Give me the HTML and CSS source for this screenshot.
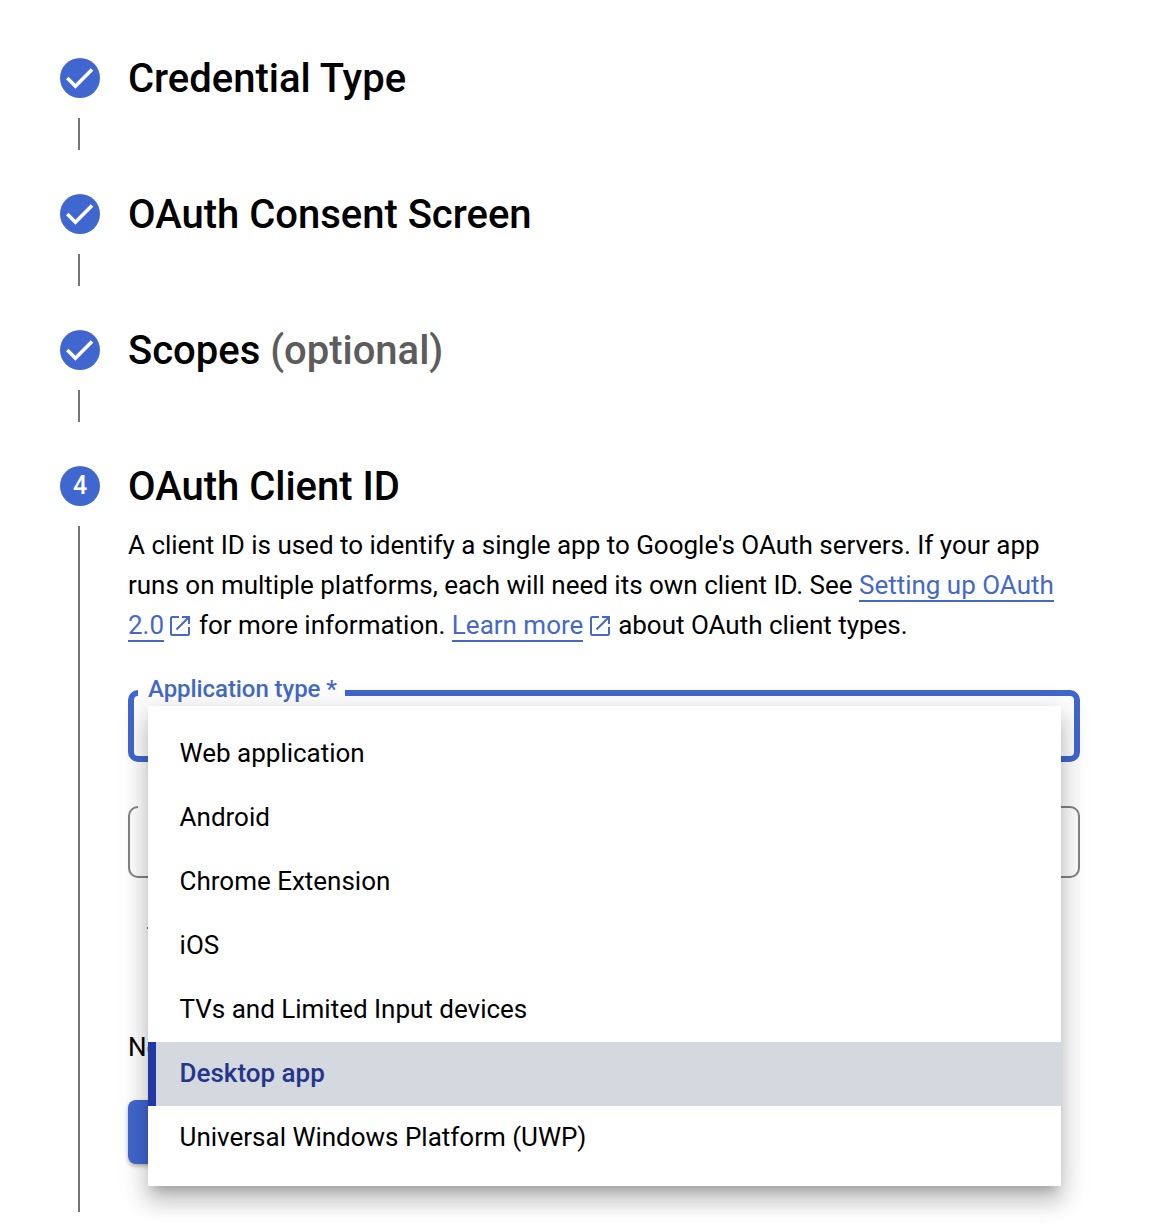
FILE: index.html
```html
<!DOCTYPE html>
<html lang="en">
<head>
<meta charset="utf-8">
<title>Create credentials</title>
<link rel="stylesheet" href="styles.css">
</head>
<body>
<svg class="defs" aria-hidden="true">
  <symbol id="check" viewBox="0 0 40 40"><path d="M7.300 20 L15.400 28.200 L32 11.400" fill="none" stroke="#fff" stroke-width="3.6"/></symbol>
  <symbol id="external" viewBox="0 0 20 20"><path d="M9 1H2.2Q1 1 1 2.200V17.800Q1 19 2.200 19H17.800Q19 19 19 17.800V11M12 1H19V8M18.500 1.500L6.500 13.500" fill="none" stroke="currentColor" stroke-width="2"/></symbol>
</svg>
<main class="stepper">
  <section class="step">
    <div class="rail"><span class="badge"><svg><use href="#check"/></svg></span><span class="line"></span></div>
    <h2>Credential Type</h2>
  </section>
  <section class="step">
    <div class="rail"><span class="badge"><svg><use href="#check"/></svg></span><span class="line"></span></div>
    <h2>OAuth Consent Screen</h2>
  </section>
  <section class="step">
    <div class="rail"><span class="badge"><svg><use href="#check"/></svg></span><span class="line"></span></div>
    <h2>Scopes <span class="optional">(optional)</span></h2>
  </section>
  <section class="step current">
    <div class="rail"><span class="badge number">4</span><span class="line"></span></div>
    <div class="content">
      <h2>OAuth Client ID</h2>
      <p class="intro">A client ID is used to identify a single app to Google's OAuth servers. If your app<br>runs on multiple platforms, each will need its own client ID. See <a>Setting up OAuth</a><br><a>2.0</a><svg class="ext"><use href="#external"/></svg> for more information. <a>Learn more</a><svg class="ext"><use href="#external"/></svg> about OAuth client types.</p>
      <div class="field select">
        <span class="label">Application type *</span>
        <ul class="menu">
          <li>Web application</li>
          <li>Android</li>
          <li>Chrome Extension</li>
          <li>iOS</li>
          <li>TVs and Limited Input devices</li>
          <li class="selected">Desktop app</li>
          <li>Universal Windows Platform (UWP)</li>
        </ul>
      </div>
      <div class="field name"><span class="notch"></span></div>
      <p class="hint">T</p>
      <p class="note">No</p>
      <div class="button"></div>
    </div>
  </section>
</main>
</body>
</html>
```
FILE: styles.css
```css
* { box-sizing: border-box; }
body {
  margin: 0;
  height: 1232px;
  overflow: hidden;
  background: #fff;
  color: #000;
  font-family: Roboto, sans-serif;
  font-size: 26px;
  letter-spacing: -0.01px;
}
.defs { display: none; }
.stepper { padding: 58px 90px 0 60px; }
.step {
  display: grid;
  grid-template-columns: 40px 1fr;
  column-gap: 28px;
  height: 136px;
}
.step.current { height: 746px; }
.rail {
  display: flex;
  flex-direction: column;
  gap: 20px;
}
.badge {
  display: flex;
  align-items: center;
  justify-content: center;
  width: 40px;
  height: 40px;
  border-radius: 50%;
  background: #4067d0;
  color: #fff;
  font-size: 25px;
  font-weight: 500;
}
.badge.number { padding-bottom: 2px; }
.badge svg { width: 40px; height: 40px; }
.line {
  width: 2px;
  height: 32px;
  margin-left: 18px;
  background: #757575;
}
.current .line { height: 686px; }
h2 {
  margin: 0;
  height: 40px;
  font-size: 40px;
  font-weight: 500;
  line-height: 42px;
  letter-spacing: -0.01px;
  white-space: nowrap;
}
.optional { color: #5c5c5c; }
.intro {
  margin: 19px 0 0;
  line-height: 40px;
  white-space: nowrap;
}
.intro a {
  color: #4469c8;
  box-shadow: 0 2px #4469c8;
}
.ext {
  width: 20px;
  height: 20px;
  margin: 0 2px 0 6.4px;
  vertical-align: -2px;
  color: #4469c8;
}
.field {
  position: relative;
  height: 72px;
  border-radius: 10px;
}
.select {
  z-index: 1;
  margin-top: 45px;
  border: 6px solid #4067d0;
}
.label {
  position: absolute;
  top: -24px;
  left: 4px;
  width: 207px;
  padding-left: 10px;
  background: #fff;
  color: #4469c8;
  font-size: 24px;
  font-weight: 500;
  line-height: 34px;
  letter-spacing: -0.07px;
  white-space: nowrap;
}
.name {
  margin-top: 44px;
  border: 2px solid #808285;
}
.notch {
  position: absolute;
  top: -2px;
  left: 8px;
  width: 40px;
  height: 2px;
  background: #fff;
}
.menu {
  position: absolute;
  top: 10px;
  left: 14px;
  width: 913px;
  height: 480px;
  margin: 0;
  padding: 16px 0;
  list-style: none;
  background: #fff;
  box-shadow: 0 10px 10px -6px rgba(0,0,0,.2), 0 16px 20px 2px rgba(0,0,0,.14), 0 6px 28px 4px rgba(0,0,0,.12);
}
.menu li {
  height: 64px;
  padding-left: 31.6px;
  line-height: 62px;
}
.menu .selected {
  padding-left: 23.6px;
  border-left: 8px solid #2438a5;
  background: #d4d8df;
  color: #24358c;
  font-weight: 500;
}
.hint {
  margin: 42px 0 0;
  padding-left: 18.5px;
  color: #5f6368;
  font-size: 24px;
  line-height: 32px;
}
.note {
  margin: 75px 0 0;
  line-height: 40px;
}
.button {
  width: 180px;
  height: 64px;
  margin-top: 33px;
  border-radius: 8px;
  background: #4067d0;
  box-shadow: 0 2px 4px rgba(0,0,0,.3);
}
```
